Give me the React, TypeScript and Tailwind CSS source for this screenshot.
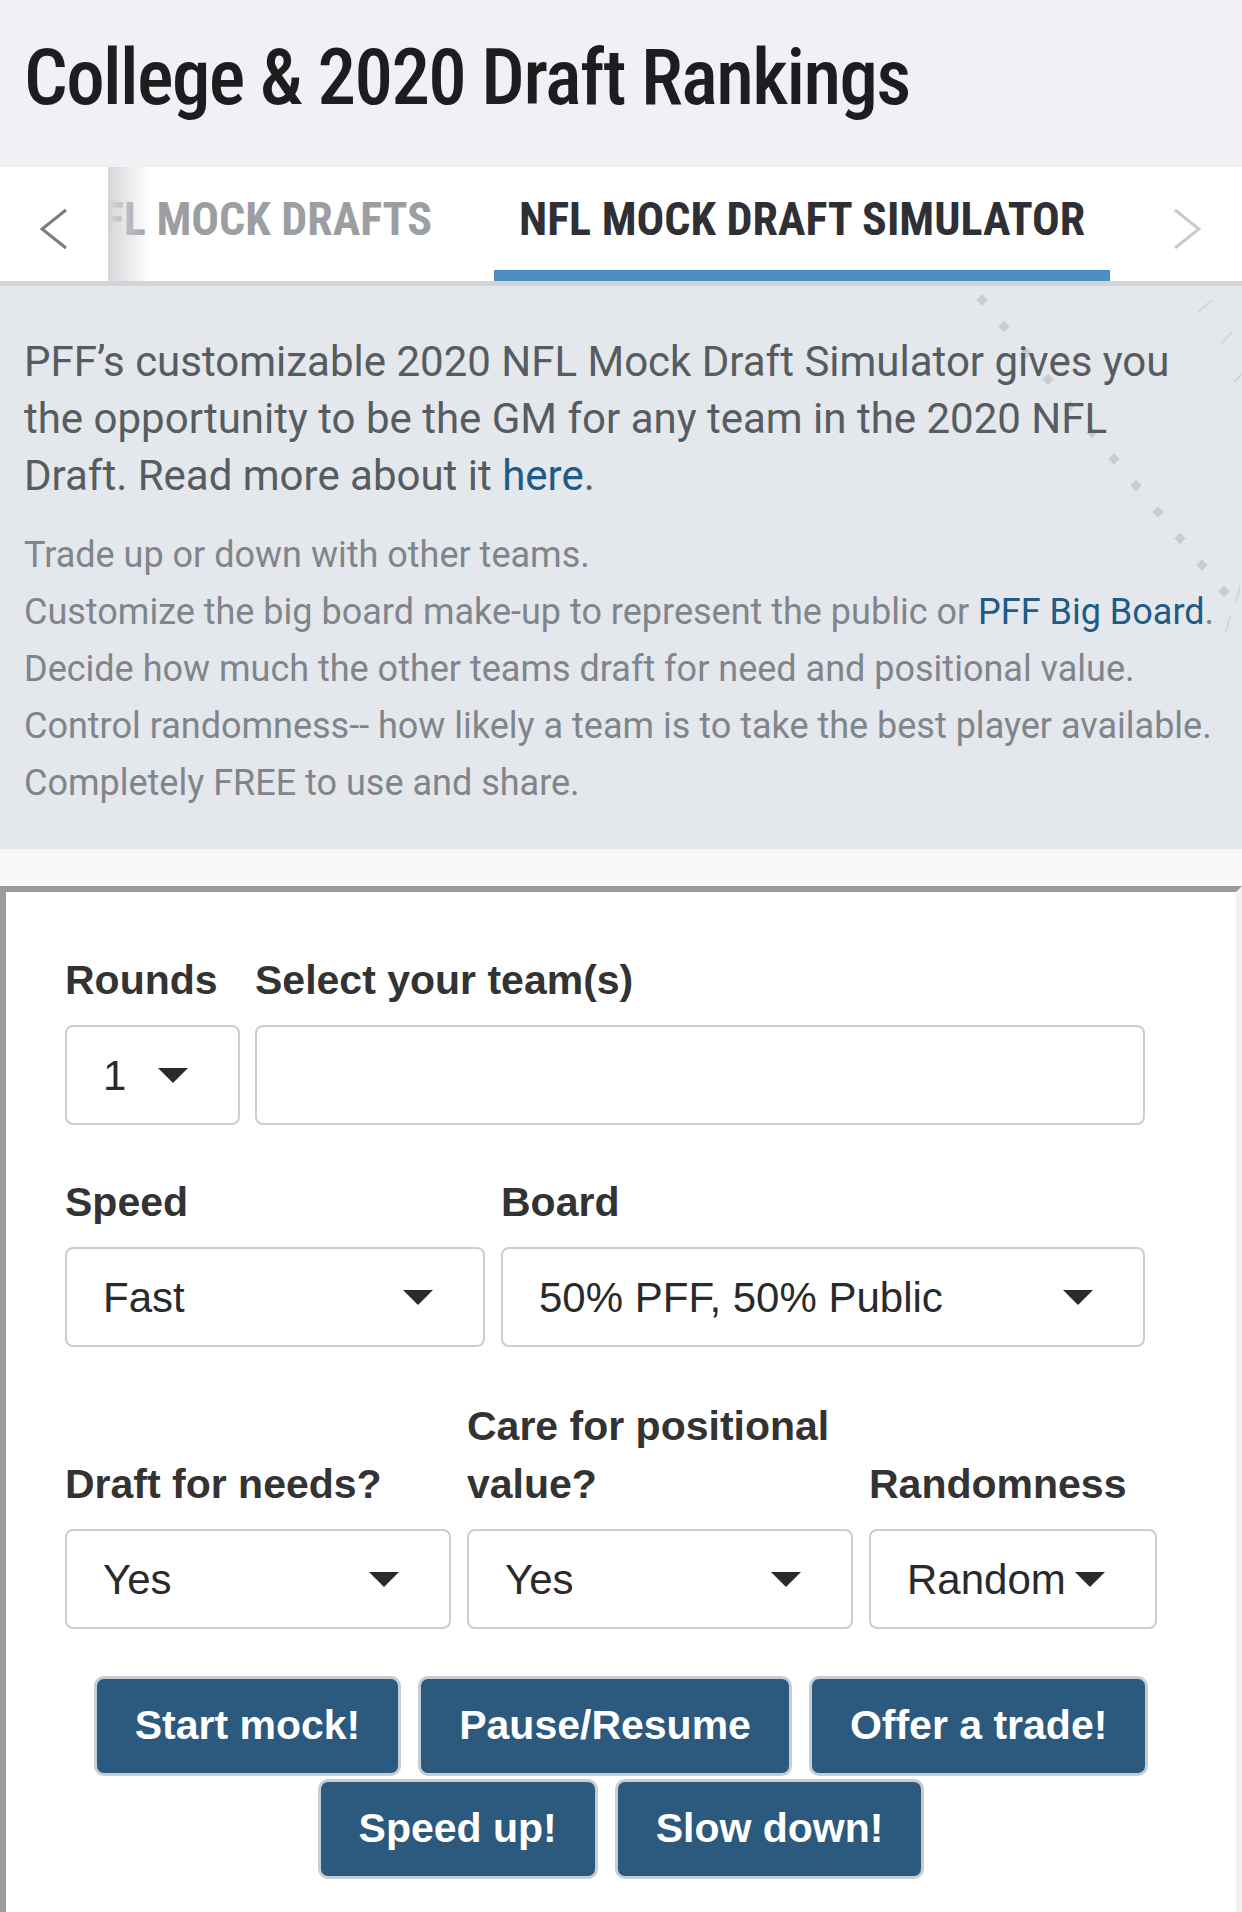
const LIST = [
  "Trade up or down with other teams.",
  null,
  "Decide how much the other teams draft for need and positional value.",
  "Control randomness-- how likely a team is to take the best player available.",
  "Completely FREE to use and share.",
];

function Caret() {
  return (
    <svg width="30" height="15" viewBox="0 0 30 15" className="shrink-0">
      <path d="M0 0 L30 0 L15 15 Z" fill="#2b2b2b" />
    </svg>
  );
}

function SelectBox({ value, width }: { value?: string; width: string }) {
  return (
    <div className={`${width} h-[100px] rounded-[8px] border-2 border-[#cdcdcd] bg-white flex items-center justify-between pl-[36px] pr-[50px] text-[42px] text-[#2a2a2a]`}>
      {value !== undefined && (
        <>
          <span className="whitespace-nowrap">{value}</span>
          <Caret />
        </>
      )}
    </div>
  );
}

function Field({ label, value, width, caret = true }: { label: string; value?: string; width: string; caret?: boolean }) {
  return (
    <div className={`${width} flex flex-col justify-end`}>
      <div className="text-[41px] font-bold leading-[58px] text-[#333] mb-[16px]">{label}</div>
      {caret ? (
        <SelectBox value={value} width="w-full" />
      ) : (
        <div className="w-full h-[100px] rounded-[8px] border-2 border-[#cdcdcd] bg-white" />
      )}
    </div>
  );
}

function Dots() {
  const diamonds = Array.from({ length: 12 }, (_, i) => ({ x: 982 + i * 22, y: 14 + i * 26.5 }));
  return (
    <svg className="absolute left-0 top-0 pointer-events-none" width="1242" height="564" viewBox="0 0 1242 564">
      {diamonds.map((d, i) => (
        <rect key={i} x={d.x - 4} y={d.y - 4} width="8" height="8" fill="#c9ccd1" transform={`rotate(45 ${d.x} ${d.y})`} />
      ))}
      <path d="M1198 26 L1212 14 M1221 58 L1232 46 M1234 96 L1242 88" stroke="#d3d6da" strokeWidth="2" />
      <path d="M1240 300 L1236 316 M1230 330 L1226 346" stroke="#d3d6da" strokeWidth="2" />
    </svg>
  );
}

function Btn({ children }: { children: string }) {
  return (
    <button className="h-[100px] px-[38px] rounded-[10px] border-[3px] border-[#c6cdd4] bg-[#2b5a7e] text-white text-[41px] font-bold whitespace-nowrap">
      {children}
    </button>
  );
}

export default function App() {
  return (
    <div className="w-[1242px] min-h-[1912px] bg-white font-['Liberation_Sans',Arial,sans-serif] overflow-hidden">
      {/* Header */}
      <header className="h-[167px] bg-[#f0f1f5] pl-[24px] pt-[40px]">
        <h1 className="font-['Roboto_Condensed',Roboto,sans-serif] font-medium text-[77px] leading-none tracking-[-1.6px] text-[#1d1d1f] whitespace-nowrap">
          College &amp; 2020 Draft Rankings
        </h1>
      </header>

      {/* Tabs */}
      <nav className="h-[119px] bg-white border-b-[5px] border-[#d3d4d8] flex font-['Roboto_Condensed',Roboto,sans-serif] uppercase">
        <div className="w-[108px] shrink-0 flex items-center pl-[40px] pt-[10px]">
          <svg width="28" height="42" viewBox="0 0 28 42">
            <path d="M26 2 L2 21 L26 40" fill="none" stroke="#7b7b7d" strokeWidth="3" />
          </svg>
        </div>
        <div className="relative flex-1 flex overflow-hidden">
          <div className="w-[349px] shrink-0 flex justify-end overflow-hidden pr-[25px] pt-[29px]">
            <span className="text-[46px] font-bold leading-none text-[#9c9ea2] whitespace-nowrap">NFL Mock Drafts</span>
          </div>
          <div className="ml-[37px] shrink-0 h-full border-b-[11px] border-[#4b8fc2] px-[25px] pt-[29px]">
            <span className="text-[46px] font-bold leading-none text-[#2e3035] whitespace-nowrap">NFL Mock Draft Simulator</span>
          </div>
          <div className="absolute left-0 top-0 bottom-0 w-[42px] bg-gradient-to-r from-[#d6d6d9] to-transparent" />
        </div>
        <div className="w-[100px] shrink-0 flex items-center pl-[31px] pt-[10px]">
          <svg width="28" height="42" viewBox="0 0 28 42">
            <path d="M2 2 L26 21 L2 40" fill="none" stroke="#c9c9cb" strokeWidth="3" />
          </svg>
        </div>
      </nav>

      {/* Intro */}
      <section className="relative bg-[#e4e7eb] pt-[47px] pb-[37px] pl-[24px] pr-[18px] font-['Roboto',sans-serif]">
        <Dots />
        <p className="relative mr-[24px] text-[42px] leading-[57px] text-[#575c61]">
          PFF’s customizable 2020 NFL Mock Draft Simulator gives you the opportunity to be the GM for any team in the 2020 NFL
          Draft. Read more about it <span className="text-[#1e5b87]">here</span>.
        </p>
        <div className="relative mt-[23px] text-[36px] leading-[57px] text-[#80858b]">
          {LIST.map((line, i) =>
            line ? (
              <p key={i} className="whitespace-nowrap">{line}</p>
            ) : (
              <p key={i} className="whitespace-nowrap">
                Customize the big board make-up to represent the public or <span className="text-[#1e5b87]">PFF Big Board</span>.
              </p>
            )
          )}
        </div>
      </section>

      <div className="h-[37px] bg-[#f8f8fa]" />

      {/* Simulator card */}
      <div className="border-t-[6px] border-l-[6px] border-r-[6px] border-t-[#9b9b9b] border-l-[#9b9b9b] border-r-[#f0f0f0] bg-white pt-[59px] pl-[59px] pr-[59px] pb-[40px]">
        <div className="flex items-end gap-[15px]">
          <Field label="Rounds" value="1" width="w-[175px]" />
          <Field label="Select your team(s)" width="w-[890px]" caret={false} />
        </div>

        <div className="flex items-end gap-[16px] mt-[48px]">
          <Field label="Speed" value="Fast" width="w-[420px]" />
          <Field label="Board" value="50% PFF, 50% Public" width="w-[644px]" />
        </div>

        <div className="flex items-end gap-[16px] mt-[50px]">
          <Field label="Draft for needs?" value="Yes" width="w-[386px]" />
          <Field label="Care for positional value?" value="Yes" width="w-[386px]" />
          <Field label="Randomness" value="Random" width="w-[288px]" />
        </div>

        <div className="flex flex-wrap justify-center gap-x-[17px] gap-y-[3px] mt-[47px]">
          <Btn>Start mock!</Btn>
          <Btn>Pause/Resume</Btn>
          <Btn>Offer a trade!</Btn>
          <Btn>Speed up!</Btn>
          <Btn>Slow down!</Btn>
        </div>
      </div>
    </div>
  );
}
